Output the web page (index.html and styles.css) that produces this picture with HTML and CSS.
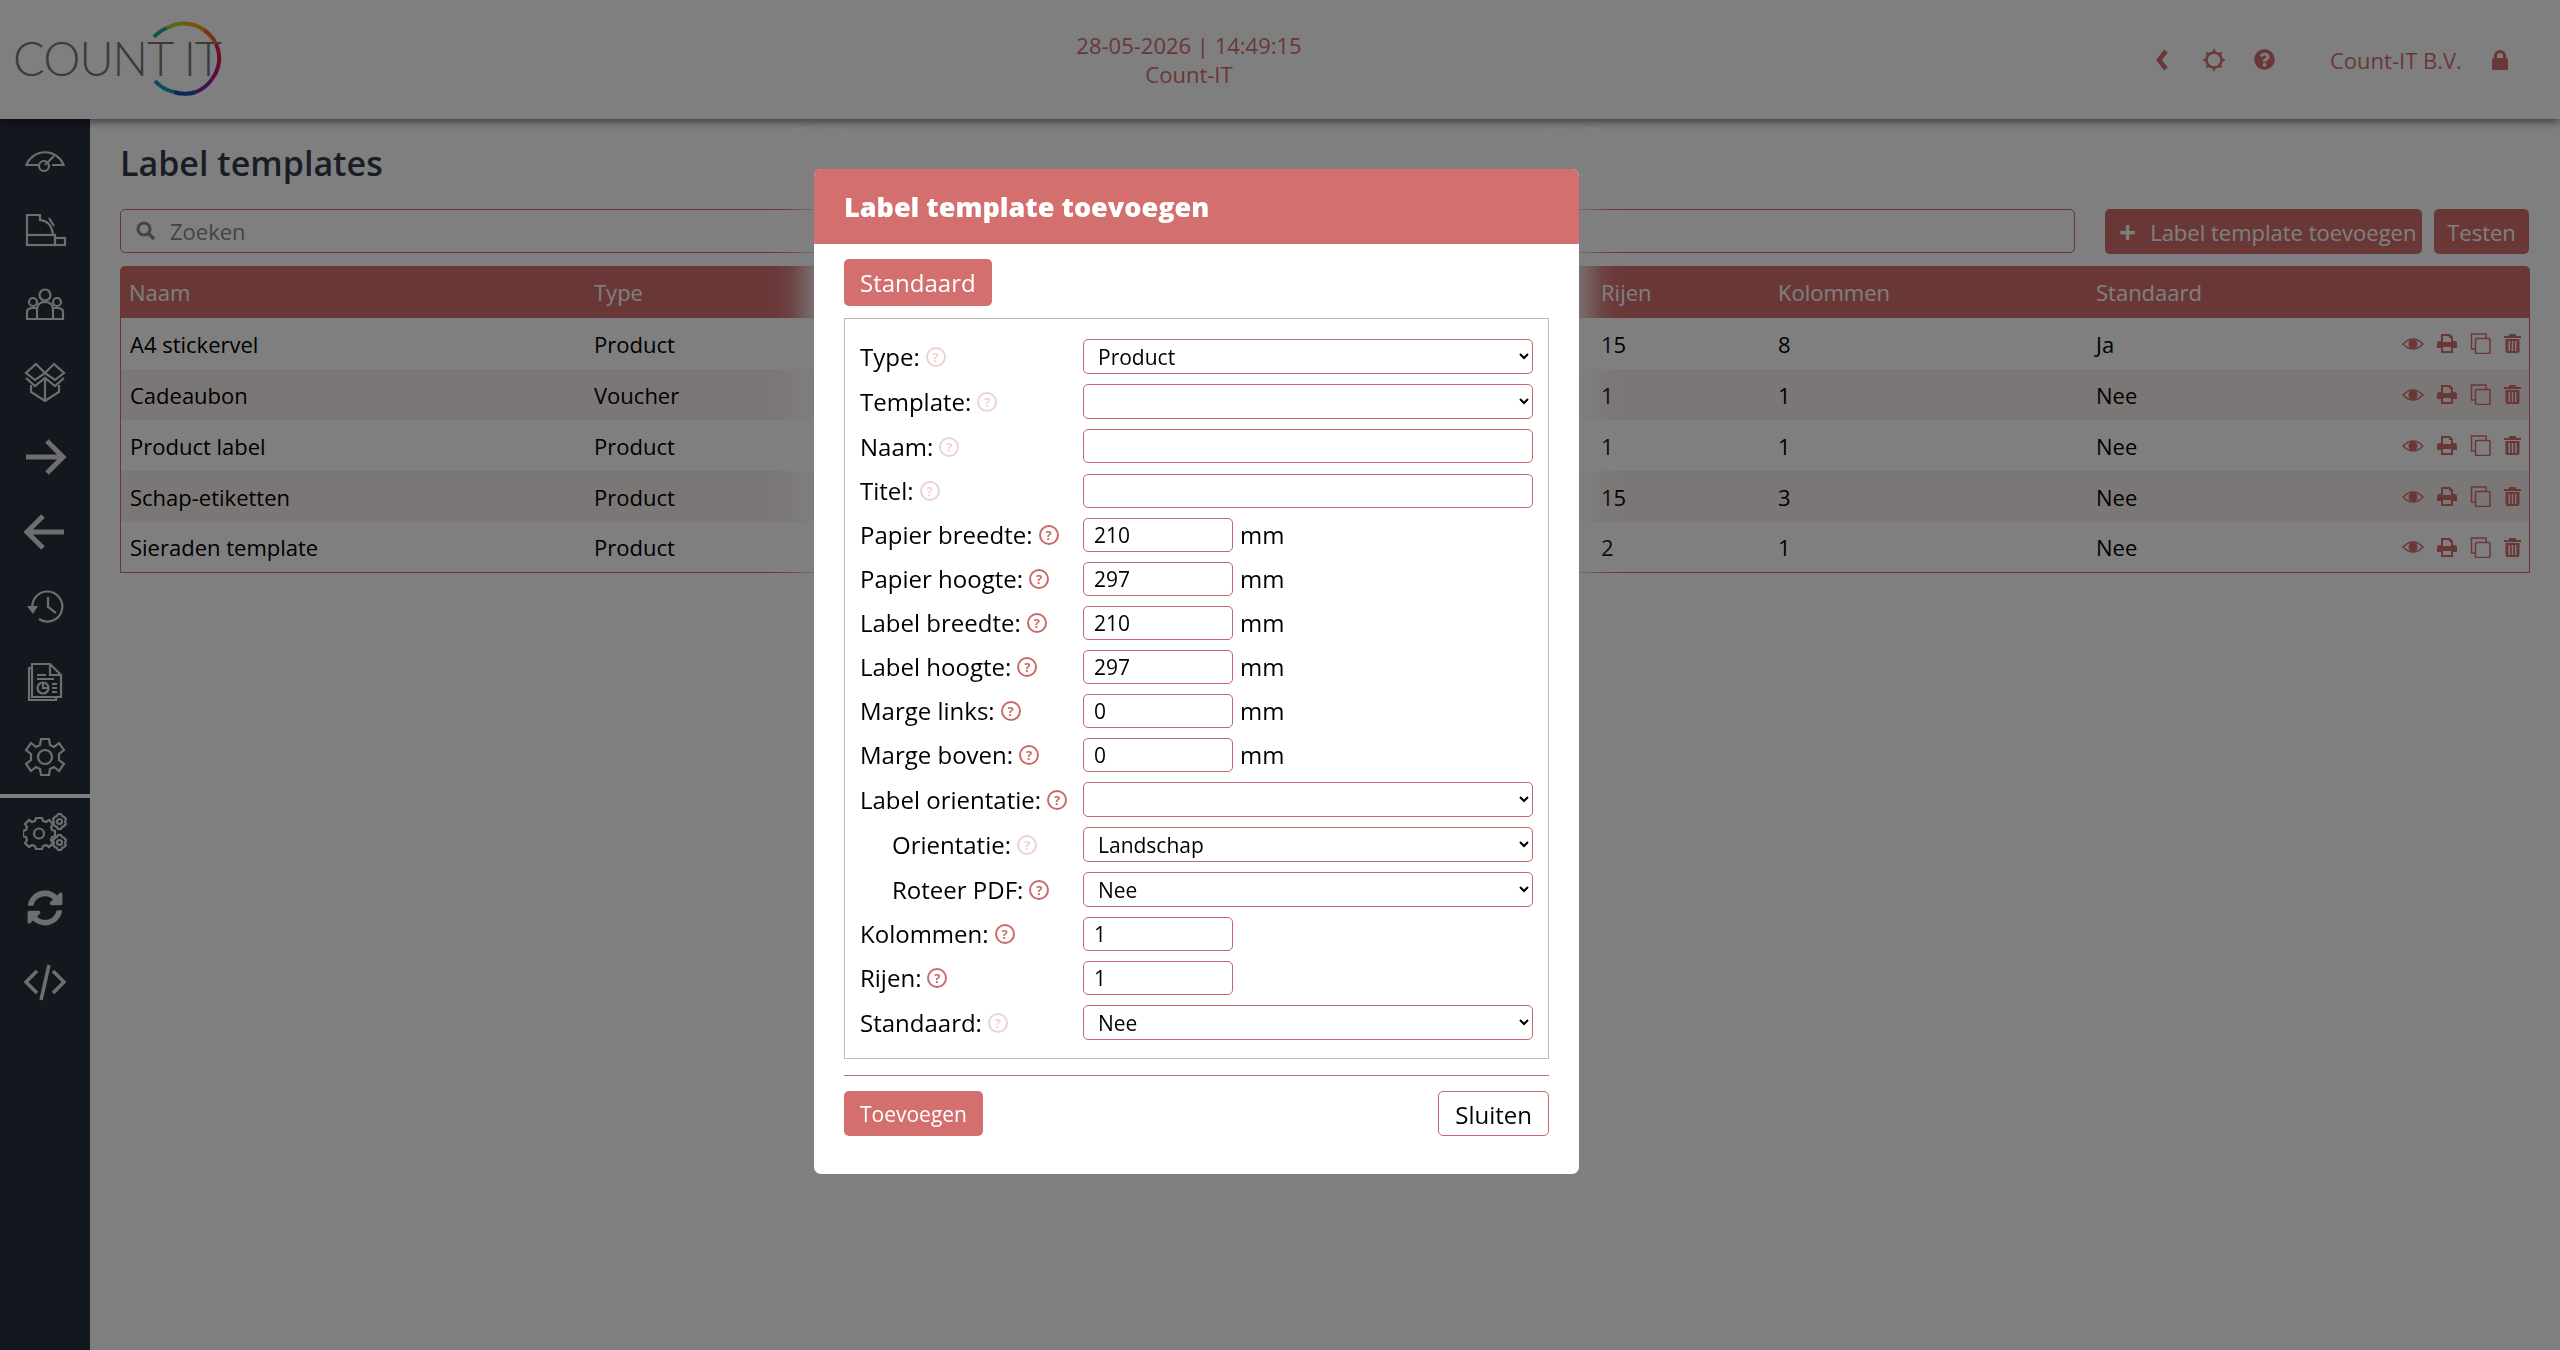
FILE: index.html
```html
<!DOCTYPE html>
<html>

	<head>
		<meta charset="UTF-8">
		<title>Label templates</title>
		<link rel="stylesheet" href="styles.css">
	</head>

	<body>
		<header class="topbar">
			<div class="logo">
				<span class="logo-text">COUNT IT</span>
				<svg class="logo-ring" width="80" height="90" viewBox="0 0 80 90" fill="none" stroke-width="4">
					<path d="M10 23 A35 35 0 0 1 23 14" stroke="#1fae8a" />
					<path d="M23 14 A35 35 0 0 1 40 9.5" stroke="#b6c832" />
					<path d="M40 9.5 A35 35 0 0 1 60 16" stroke="#f2a51e" />
					<path d="M60 16 A35 35 0 0 1 72 30" stroke="#ee6a24" />
					<path d="M72 30 A35 35 0 0 1 75 48" stroke="#dd1f4f" />
					<path d="M75 48 A35 35 0 0 1 68 65" stroke="#c31478" />
					<path d="M68 65 A35 35 0 0 1 52 78" stroke="#7a2a94" />
					<path d="M52 78 A35 35 0 0 1 30 78" stroke="#1f4fb0" />
					<path d="M30 78 A35 35 0 0 1 11 67" stroke="#1b9ac4" />
				</svg>
			</div>
			<div class="top-center">
				<div>28-05-2026 | 14:49:15</div>
				<div>Count-IT</div>
			</div>
			<div class="top-right">
				<svg class="top-icon ic-back" width="14" height="22" viewBox="0 0 14 22"><path d="M11 2 L4 11 L11 20" fill="none" stroke="currentColor" stroke-width="4.5" /></svg>
				<svg class="top-icon ic-sun" width="24" height="24" viewBox="0 0 24 24">
					<circle cx="12" cy="12" r="7.5" fill="none" stroke="currentColor" stroke-width="2.4" />
					<path d="M12 0.5 l2 3 h-4z M12 23.5 l2 -3 h-4z M0.5 12 l3 2 v-4z M23.5 12 l-3 2 v-4z M4 4 l3.6 .8 l-2.8 2.8z M20 4 l-3.6 .8 l2.8 2.8z M4 20 l3.6 -.8 l-2.8 -2.8z M20 20 l-3.6 -.8 l2.8 -2.8z" fill="currentColor" />
				</svg>
				<svg class="top-icon ic-help" width="21" height="21" viewBox="0 0 512 512"><path fill="currentColor" d="M504 256c0 136.997-111.043 248-248 248S8 392.997 8 256C8 119.083 119.043 8 256 8s248 111.083 248 248zM262.655 90c-54.497 0-89.255 22.957-116.549 63.758-3.536 5.286-2.353 12.415 2.715 16.258l34.699 26.31c5.205 3.947 12.621 3.008 16.665-2.122 17.864-22.658 30.113-35.797 57.303-35.797 20.429 0 45.698 13.148 45.698 32.958 0 14.976-12.363 22.667-32.534 33.976C247.128 238.528 216 254.941 216 296v4c0 6.627 5.373 12 12 12h56c6.627 0 12-5.373 12-12v-1.333c0-28.462 83.186-29.647 83.186-106.667 0-58.002-60.165-102-116.531-102zM256 338c-25.365 0-46 20.635-46 46 0 25.364 20.635 46 46 46s46-20.636 46-46c0-25.365-20.635-46-46-46z" /></svg>
				<span class="company">Count-IT B.V.</span>
				<svg class="top-icon ic-lock" width="16" height="20" viewBox="0 0 16 20"><path fill="currentColor" d="M2 8 V6 a6 6 0 0 1 12 0 V8 h.5 a1.5 1.5 0 0 1 1.5 1.5 V18.500 a1.500 1.500 0 0 1 -1.500 1.500 H1.500 A1.500 1.500 0 0 1 0 18.500 V9.500 A1.500 1.500 0 0 1 1.500 8z M5 8 h6 V6 a3 3 0 0 0 -6 0z" /></svg>
			</div>
		</header>

		<div class="layout">
			<nav class="sidebar">
				<a class="nav-item"><svg width="44" height="44" viewBox="0 0 44 44"><path d="M3 31 A20 20 0 0 1 41 31 M3 30 H15 M29 30 H41 M22 30 L31 21" /><circle cx="21" cy="31" r="5" /></svg></a>
				<a class="nav-item"><svg width="44" height="44" viewBox="0 0 44 44"><path d="M4 26 V5 H17 V10 Q28 11 30 24 M26 8 L31 16" /><rect x="4" y="25" width="28" height="10" /><rect x="32" y="28" width="10" height="7" /></svg></a>
				<a class="nav-item"><svg width="44" height="44" viewBox="0 0 44 44"><circle cx="22" cy="10" r="5.500" /><circle cx="10" cy="17" r="4" /><circle cx="34" cy="17" r="4" /><path d="M3 34 H41 M14 33 V25 Q14 17 22 17 Q30 17 30 25 V33 M4 33 V27 Q4 23 10 23 H14 M40 33 V27 Q40 23 34 23 H30" /></svg></a>
				<a class="nav-item"><svg width="44" height="44" viewBox="0 0 44 44"><path d="M22 13 L13 4 L3 13 L12 20 L22 13 L32 20 L41 13 L31 4 L22 13 M3 18 L12 26 L22 18 L32 26 L41 18 M8 25 V32 L22 41 L36 32 V25 M22 20 V41" /></svg></a>
				<a class="nav-item"><svg width="44" height="44" viewBox="0 0 44 44"><path class="thick" d="M3 22 H40 M24 6 L40 22 L24 38" /></svg></a>
				<a class="nav-item"><svg width="44" height="44" viewBox="0 0 44 44"><path class="thick" d="M41 22 H4 M20 6 L4 22 L20 38" /></svg></a>
				<a class="nav-item"><svg width="44" height="44" viewBox="0 0 44 44"><path d="M10 26 A15 15 0 1 1 16 34" /><path class="fill" d="M4 21 H15 L10 29z" /><path d="M25 12 V22 L33 28" /></svg></a>
				<a class="nav-item"><svg width="44" height="44" viewBox="0 0 44 44"><path d="M9 8 H6 V40 H33 V38 M9 4 H27 L38 15 V37 H9z M27 4 V15 H38 M14 15 H23 M14 19 H31" /><circle cx="20" cy="28" r="5.500" /><path d="M20 23 V28 H25 M29 24 H34 M29 28 H34 M29 32 H34" /></svg></a>
				<a class="nav-item"><svg width="44" height="44" viewBox="0 0 44 44"><path d="M18 4 H26 L27 10 L31 12 L36 8 L41 15 L36 19 V25 L41 29 L36 36 L31 32 L27 34 L26 40 H18 L17 34 L13 32 L8 36 L3 29 L8 25 V19 L3 15 L8 8 L13 12 L17 10z" /><circle cx="22" cy="22" r="7" /></svg></a>
				<div class="nav-divider"></div>
				<a class="nav-item up"><svg width="44" height="44" viewBox="0 0 44 44"><path d="M13 12 H19 L20 15 L23 16 L26 14 L30 18 L28 21 L29 24 L32 25 V30 L29 31 L28 34 L30 37 L26 41 L23 39 L20 40 L19 43 H13 L12 40 L9 39 L6 41 L2 37 L4 34 L3 31 L0 30 V25 L3 24 L4 21 L2 18 L6 14 L9 16 L12 15z" transform="translate(0 -5)" /><circle cx="16" cy="22.500" r="5" /><path d="M35 3 H38 L39 5 L41 6 L43 8 L42 11 L43 13 L41 15 L39 16 L38 18 H35 L34 16 L32 15 L30 13 L31 11 L30 8 L32 6 L34 5z" /><circle cx="36.500" cy="10.500" r="2.500" /><path d="M35 24 H38 L39 26 L41 27 L43 29 L42 32 L43 34 L41 36 L39 37 L38 39 H35 L34 37 L32 36 L30 34 L31 32 L30 29 L32 27 L34 26z" /><circle cx="36.500" cy="31.500" r="2.500" /></svg></a>
				<a class="nav-item up"><svg class="solid" width="36" height="36" viewBox="0 0 512 512"><path d="M370.72 133.28C339.458 104.008 298.888 87.962 255.848 88c-77.458.068-144.328 53.178-162.791 126.85-1.344 5.363-6.122 9.15-11.651 9.15H24.103c-7.498 0-13.194-6.807-11.807-14.176C33.933 94.924 134.813 8 256 8c66.448 0 126.791 26.136 171.315 68.685L463.03 40.97C478.149 25.851 504 36.559 504 57.941V192c0 13.255-10.745 24-24 24H345.941c-21.382 0-32.09-25.851-16.971-40.971l41.75-41.749zM32 296h134.059c21.382 0 32.09 25.851 16.971 40.971l-41.75 41.75c31.262 29.273 71.835 45.319 114.876 45.28 77.418-.07 144.315-53.144 162.787-126.849 1.344-5.363 6.122-9.15 11.651-9.15h57.304c7.498 0 13.194 6.807 11.807 14.176C478.067 417.076 377.187 504 256 504c-66.448 0-126.791-26.136-171.315-68.685L48.97 471.03C33.851 486.149 8 475.441 8 454.059V320c0-13.255 10.745-24 24-24z" /></svg></a>
				<a class="nav-item up"><svg width="44" height="44" viewBox="0 0 44 44"><path class="med" d="M14 10 L3 21 L14 32 M30 10 L41 21 L30 32 M26 4 L18 39" /></svg></a>
			</nav>

			<main class="content">
				<h1>Label templates</h1>
				<div class="toolbar">
					<div class="search">
						<svg width="20" height="20" viewBox="0 0 20 20"><circle cx="8" cy="8" r="6" fill="none" stroke="currentColor" stroke-width="3" /><path d="M12.500 12.500 L18 18" stroke="currentColor" stroke-width="3.500" /></svg>
						<span>Zoeken</span>
					</div>
					<a class="btn"><span class="plus">+</span>Label template toevoegen</a>
					<a class="btn btn-test">Testen</a>
				</div>

				<table class="list">
					<colgroup>
						<col class="c-naam"><col class="c-type"><col class="c-gap"><col class="c-rijen"><col class="c-kol"><col class="c-std"><col>
					</colgroup>
					<thead>
						<tr><th>Naam</th><th>Type</th><th></th><th>Rijen</th><th>Kolommen</th><th>Standaard</th><th></th></tr>
					</thead>
					<tbody id="rows"></tbody>
				</table>
			</main>
		</div>

		<div class="overlay">
			<div class="modal">
				<div class="modal-head">Label template toevoegen</div>
				<div class="modal-body">
					<div class="tabs"><a class="tab">Standaard</a></div>
					<div class="form-box">
						<div class="row sel"><label>Type:<i class="help off">?</i></label><select><option>Product</option></select></div>
						<div class="row sel"><label>Template:<i class="help off">?</i></label><select><option></option></select></div>
						<div class="row sel"><label>Naam:<i class="help off">?</i></label><input type="text" class="wide"></div>
						<div class="row"><label>Titel:<i class="help off">?</i></label><input type="text" class="wide"></div>
						<div class="row"><label>Papier breedte:<i class="help">?</i></label><span class="num"><input type="text" value="210"> mm</span></div>
						<div class="row"><label>Papier hoogte:<i class="help">?</i></label><span class="num"><input type="text" value="297"> mm</span></div>
						<div class="row"><label>Label breedte:<i class="help">?</i></label><span class="num"><input type="text" value="210"> mm</span></div>
						<div class="row"><label>Label hoogte:<i class="help">?</i></label><span class="num"><input type="text" value="297"> mm</span></div>
						<div class="row"><label>Marge links:<i class="help">?</i></label><span class="num"><input type="text" value="0"> mm</span></div>
						<div class="row"><label>Marge boven:<i class="help">?</i></label><span class="num"><input type="text" value="0"> mm</span></div>
						<div class="row sel"><label>Label orientatie:<i class="help">?</i></label><select><option></option></select></div>
						<div class="row sel sub"><label>Orientatie:<i class="help off">?</i></label><select><option>Landschap</option></select></div>
						<div class="row sel sub"><label>Roteer PDF:<i class="help">?</i></label><select><option>Nee</option></select></div>
						<div class="row"><label>Kolommen:<i class="help">?</i></label><span class="num"><input type="text" value="1"></span></div>
						<div class="row"><label>Rijen:<i class="help">?</i></label><span class="num"><input type="text" value="1"></span></div>
						<div class="row sel last"><label>Standaard:<i class="help off">?</i></label><select><option>Nee</option></select></div>
					</div>
					<div class="modal-foot">
						<a class="btn btn-add">Toevoegen</a>
						<a class="btn-close">Sluiten</a>
					</div>
				</div>
			</div>
		</div>

		<script type="text/javascript">
			var data = [
				['A4 stickervel', 'Product', '15', '8', 'Ja'],
				['Cadeaubon', 'Voucher', '1', '1', 'Nee'],
				['Product label', 'Product', '1', '1', 'Nee'],
				['Schap-etiketten', 'Product', '15', '3', 'Nee'],
				['Sieraden template', 'Product', '2', '1', 'Nee']
			];
			var icons = '<svg width="22" height="14" viewBox="0 0 22 14"><path d="M1 7 Q11 -3 21 7 Q11 17 1 7z" fill="none" stroke="currentColor" stroke-width="1.500" /><circle cx="11" cy="7" r="4.500" fill="currentColor" /></svg>' +
				'<svg width="20" height="19" viewBox="0 0 20 19"><path fill="currentColor" d="M4 0 H13 L16 3 V7 H17.500 A2.500 2.500 0 0 1 20 9.500 V14 H16 V19 H4 V14 H0 V9.500 A2.500 2.500 0 0 1 2.500 7 H4z M6 2 V8 H14 V4 H12 V2z M6 13 V17 H14 V13z" /></svg>' +
				'<svg width="21" height="21" viewBox="0 0 21 21" fill="none" stroke="currentColor" stroke-width="1.500"><path d="M5 16 H1.500 V1 H16 V5" /><rect x="5.500" y="5.500" width="14.500" height="15" rx="1" /></svg>' +
				'<svg width="17" height="19" viewBox="0 0 17 19"><path fill="currentColor" d="M5.500 0 H11.500 L12.500 2 H17 V4 H0 V2 H4.500z M1.500 5 H15.500 V17 A2 2 0 0 1 13.500 19 H3.500 A2 2 0 0 1 1.500 17z M4.500 7 V17 H6 V7z M7.750 7 V17 H9.250 V7z M11 7 V17 H12.500 V7z" /></svg>';
			var html = '';
			for(var i = 0; i < data.length; i++) {
				var d = data[i];
				html += '<tr><td>' + d[0] + '</td><td>' + d[1] + '</td><td></td><td>' + d[2] + '</td><td>' + d[3] + '</td><td>' + d[4] + '</td><td class="acts">' + icons + '</td></tr>';
			}
			document.getElementById('rows').innerHTML = html;
		</script>
	</body>

</html>
```
FILE: styles.css
```css
* {
	margin: 0;
	padding: 0;
	box-sizing: border-box;
}

html,
body {
	width: 2560px;
	height: 1350px;
	overflow: hidden;
}

body {
	background: #fff;
	font-family: "Open Sans", "Liberation Sans", sans-serif;
	font-size: 22px;
	color: #000;
}

.topbar {
	height: 119px;
	display: grid;
	grid-template-columns: 1074px 230px 1fr;
	align-items: center;
	box-shadow: 0 3px 8px rgba(0, 0, 0, 0.5);
	position: relative;
	z-index: 2;
	background: #fff;
}

.logo {
	position: relative;
	height: 119px;
	padding: 28px 0 0 13px;
}

.logo-text {
	font-family: "Lato", "Open Sans", sans-serif;
	font-weight: 300;
	font-size: 47px;
	line-height: 60px;
	color: #777;
	letter-spacing: -1px;
}

.logo-ring {
	position: absolute;
	left: 144px;
	top: 14px;
}

.top-center {
	text-align: center;
	color: #d46f6f;
	font-size: 22px;
	line-height: 29px;
}

.top-right {
	display: flex;
	align-items: center;
	color: #d46f6f;
	padding-left: 851px;
	font-size: 22px;
}

.top-icon {
	flex: none;
}

.ic-sun {
	margin-left: 33px;
}

.ic-help {
	margin-left: 28px;
}

.company {
	margin-left: 55px;
	width: 170px;
	white-space: nowrap;
}

.ic-lock {
	margin-left: -8px;
	color: #d46f6f;
}

.layout {
	display: flex;
	height: 1231px;
}

.sidebar {
	width: 90px;
	flex: none;
	background: #272e3d;
}

.nav-item {
	display: flex;
	align-items: center;
	justify-content: center;
	height: 75px;
}

.nav-item.up svg {
	position: relative;
	top: -3px;
}

.nav-item svg {
	fill: none;
	stroke: #dcdcdc;
	stroke-width: 2.2;
}

.nav-item svg.solid {
	fill: #dcdcdc;
	stroke: none;
}

.nav-item .thick {
	stroke-width: 5;
}

.nav-item .med {
	stroke-width: 3.500;
}

.nav-item .fill {
	fill: #dcdcdc;
	stroke: none;
}

.nav-divider {
	height: 4px;
	background: #fff;
}

.content {
	flex: 1;
	padding: 20px 30px 0 30px;
}

h1 {
	font-size: 34px;
	font-weight: 600;
	line-height: 48px;
	color: #333b4d;
}

.toolbar {
	display: flex;
	margin-top: 22px;
	height: 45px;
}

.search {
	width: 1955px;
	height: 44px;
	border: 1px solid #d46f6f;
	border-radius: 5px;
	display: flex;
	align-items: center;
	padding-left: 15px;
	color: #888;
	background: #fff;
}

.search svg {
	margin-right: 14px;
}

.btn {
	display: flex;
	align-items: center;
	background: #d46f6f;
	color: #fff;
	border-radius: 5px;
	font-size: 22px;
	white-space: nowrap;
}

.toolbar .btn {
	margin-left: 30px;
	width: 317px;
	padding-left: 14px;
}

.toolbar .btn-test {
	margin-left: 12px;
	width: 95px;
	justify-content: center;
	padding-left: 0;
}

.plus {
	font-weight: 700;
	font-size: 30px;
	line-height: 30px;
	margin-right: 14px;
}

.list {
	width: 2410px;
	margin-top: 12px;
	border-collapse: separate;
	border-spacing: 0;
	table-layout: fixed;
	font-size: 22px;
}

.c-naam {
	width: 465px;
}

.c-type {
	width: 300px;
}

.c-gap {
	width: 707px;
}

.c-rijen {
	width: 177px;
}

.c-kol {
	width: 318px;
}

.c-std {
	width: 200px;
}

.list th {
	background: #d46f6f;
	color: #fff;
	font-weight: 400;
	text-align: left;
	height: 52px;
	padding-left: 9px;
}

.list th:first-child {
	border-top-left-radius: 5px;
}

.list th:last-child {
	border-top-right-radius: 5px;
}

.list td {
	height: 51px;
	padding-left: 9px;
}

.list tbody tr:nth-child(even) td {
	background: #f8efef;
}

.list tbody td:first-child {
	border-left: 1px solid #d46f6f;
}

.list tbody td:last-child {
	border-right: 1px solid #d46f6f;
}

.list tbody tr:last-child td {
	border-bottom: 1px solid #d46f6f;
}

.list .acts {
	color: #d46f6f;
	white-space: nowrap;
	text-align: right;
	padding-right: 8px;
	font-size: 0;
}

.acts svg {
	margin-left: 13px;
	vertical-align: middle;
}

.overlay {
	position: fixed;
	left: 0;
	top: 0;
	width: 2560px;
	height: 1350px;
	background: rgba(0, 0, 0, 0.5);
	z-index: 5;
}

.modal {
	position: absolute;
	left: 814px;
	top: 169px;
	width: 765px;
	height: 1005px;
	background: #fff;
	border-radius: 7px;
	box-shadow: 0 0 30px 10px #808080;
}

.modal-head {
	height: 75px;
	background: #d46f6f;
	color: #fff;
	font-size: 27px;
	font-weight: 800;
	line-height: 75px;
	padding-left: 30px;
	border-radius: 7px 7px 0 0;
}

.modal-body {
	padding: 15px 30px 0 30px;
}

.tab {
	display: inline-block;
	background: #d46f6f;
	color: #fff;
	font-size: 24px;
	line-height: 47px;
	height: 47px;
	padding: 0 16px;
	border-radius: 5px;
}

.tabs {
	height: 59px;
}

.form-box {
	border: 1px solid #bbb;
	padding: 20px 15px 19px 15px;
	height: 741px;
}

.row {
	display: grid;
	grid-template-columns: 223px 450px;
	height: 34px;
	margin-bottom: 10px;
}

.row.sel {
	height: 35px;
}

.row.last {
	margin-bottom: 0;
}

.row.sub label {
	padding-left: 32px;
}

label {
	font-size: 24px;
	line-height: 30px;
	white-space: nowrap;
	display: flex;
	align-items: center;
}

.help {
	display: inline-block;
	width: 20px;
	height: 20px;
	margin-left: 6px;
	border: 2px solid #c96a6a;
	border-radius: 50%;
	font-style: normal;
	font-weight: 700;
	font-size: 13px;
	line-height: 16px;
	text-align: center;
	color: #c96a6a;
}

.help.off {
	opacity: 0.3;
}

select,
input {
	font-family: "Open Sans", "Liberation Sans", sans-serif;
	font-size: 21px;
	color: #000;
	background: #fff;
	border: 1px solid #c4666a;
	border-radius: 5px;
	height: 34px;
	padding-left: 10px;
	display: block;
	outline: none;
}

select {
	height: 35px;
	width: 450px;
}

input.wide {
	width: 450px;
}

.num {
	display: flex;
	align-items: center;
	font-size: 24px;
	line-height: 30px;
}

.num input {
	width: 150px;
	margin-right: 7px;
}

.modal-foot {
	margin-top: 16px;
	border-top: 1px solid #c96a6a;
	padding-top: 15px;
	display: flex;
	justify-content: space-between;
}

.btn-add {
	height: 45px;
	padding: 0 16px;
	font-size: 21px;
}

.btn-close {
	height: 45px;
	padding: 0 16px;
	border: 1px solid #c4666a;
	border-radius: 5px;
	font-size: 24px;
	line-height: 45px;
}
```
